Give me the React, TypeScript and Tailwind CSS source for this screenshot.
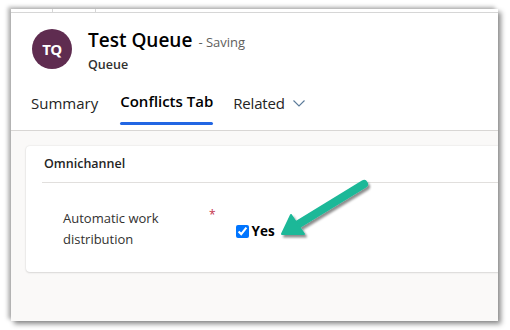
const font = { fontFamily: '"Open Sans", "Noto Sans", sans-serif' };

function Arrow() {
  return (
    <svg className="absolute left-0 top-0 pointer-events-none" width="510" height="330" viewBox="0 0 510 330">
      <defs>
        <filter id="sh" x="-20%" y="-20%" width="140%" height="140%">
          <feDropShadow dx="2" dy="2.5" stdDeviation="1.2" floodColor="#000" floodOpacity="0.45" />
        </filter>
      </defs>
      <g filter="url(#sh)" fill="#1bb898" stroke="#1bb898">
        <line x1="364" y1="184" x2="297" y2="225" strokeWidth="8" strokeLinecap="round" />
        <polygon points="282,234 291,215 304,234" strokeWidth="2" strokeLinejoin="round" />
      </g>
    </svg>
  );
}

export default function App() {
  return (
    <div className="relative w-[510px] h-[330px] bg-white overflow-hidden" style={font}>
      <div className="pt-[9px] pl-[11px]">
        {/* screenshot frame */}
        <div className="relative w-[487px] h-[312px] overflow-hidden bg-[#faf9f8] shadow-[-3px_-2px_4px_rgba(0,0,0,0.3),3px_3px_5px_rgba(0,0,0,0.45)]">
          {/* cropped toolbar remnant */}
          <div className="relative h-[4px] bg-white border-b border-[#d6d6d6]">
            <div className="absolute left-[41px] top-0 h-[4px] w-px bg-[#d6d6d6]" />
            <div className="absolute left-[84px] top-0 h-[4px] w-px bg-[#d6d6d6]" />
          </div>

          {/* header */}
          <div className="bg-white border-b border-[#d8d6d4] h-[118px] flex flex-col">
            <div className="flex items-start pl-[21px] pt-[16px]">
              <div className="w-[40px] h-[40px] rounded-full bg-[#5f2c50] flex items-center justify-center text-white text-[15px] font-bold tracking-[-0.5px]">
                TQ
              </div>
              <div className="ml-[16px] -mt-[2px]">
                <div className="flex items-baseline">
                  <span className="text-[19px] font-semibold text-black leading-[26px]">Test Queue</span>
                  <span className="ml-[6px] text-[13px] text-[#605e5c]">- Saving</span>
                </div>
                <div className="text-[12.5px] font-semibold text-[#323130] leading-[18px] mt-[3px]">Queue</div>
              </div>
            </div>
            <div className="flex items-end mt-auto pl-[20px]">
              <div className="pb-[16px] text-[15px] text-[#242424]">Summary</div>
              <div className="ml-[22px] flex flex-col items-stretch">
                <div className="text-[15px] font-semibold text-black">Conflicts Tab</div>
                <div className="mt-[10px] h-[3px] rounded-full bg-[#2266e3] mb-[5px]" />
              </div>
              <div className="ml-[20px] pb-[16px] flex items-center text-[15px] text-[#242424] tracking-[-0.2px]">
                Related
                <svg className="ml-[8px] mt-[2px]" width="12" height="7" viewBox="0 0 12 7" fill="none" stroke="#5b7a99" strokeWidth="1.1">
                  <polyline points="0.5,0.5 6,6 11.5,0.5" />
                </svg>
              </div>
            </div>
          </div>

          {/* card */}
          <div className="ml-[15px] mt-[15px] w-[600px] h-[126px] bg-white rounded-[4px] shadow-[0_0_2px_rgba(0,0,0,0.12),0_1px_2px_rgba(0,0,0,0.1)]">
            <div className="h-[36px] pl-[18px] flex items-center text-[12.5px] font-semibold text-[#242424]">Omnichannel</div>
            <div className="ml-[16px] h-px bg-[#e1dfdd]" />
            <div className="flex pt-[25px] pl-[37px]">
              <div className="w-[146px] text-[13px] leading-[21px] text-[#323130]">
                Automatic work
                <br />
                distribution
              </div>
              <div className="text-[#c4314b] text-[12px] leading-[12px] mt-[1px]">*</div>
              <div className="ml-[20px] mt-[16px] flex items-center h-[15px]">
                <input type="checkbox" checked readOnly className="w-[13px] h-[13px] m-0 accent-[#0075ff]" />
                <span className="ml-[3px] text-[13.5px] font-bold text-black">Yes</span>
              </div>
            </div>
          </div>
        </div>
      </div>
      <Arrow />
    </div>
  );
}
